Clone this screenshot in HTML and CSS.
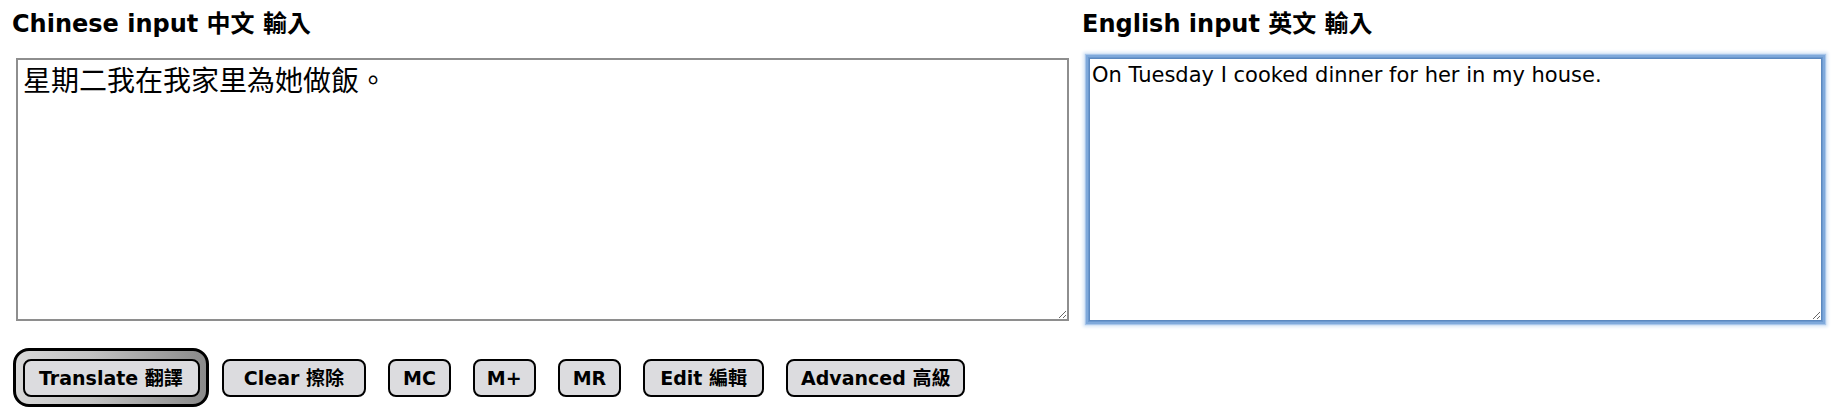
FILE: index.html
```html
<!DOCTYPE html>
<html lang="zh-Hant">
<head>
<meta charset="utf-8">
<title>Chinese English input</title>
<link rel="stylesheet" href="styles.css">
</head>
<body>
<div class="page">
  <div class="inputs">
    <div class="col col-zh">
      <h2 class="label">Chinese input 中文 輸入</h2>
      <textarea class="box box-zh">星期二我在我家里為她做飯。</textarea>
    </div>
    <div class="col col-en">
      <h2 class="label">English input 英文 輸入</h2>
      <textarea class="box box-en focused">On Tuesday I cooked dinner for her in my house.</textarea>
    </div>
  </div>
  <div class="actions">
    <span class="default-ring"><button class="btn btn-default" type="button">Translate 翻譯</button></span>
    <button class="btn btn-clear" type="button">Clear 擦除</button>
    <button class="btn" type="button">MC</button>
    <button class="btn btn-narrow" type="button">M+</button>
    <button class="btn" type="button">MR</button>
    <button class="btn btn-edit" type="button">Edit 編輯</button>
    <button class="btn" type="button">Advanced 高級</button>
  </div>
</div>
</body>
</html>
```

FILE: styles.css
```css
html, body {
  margin: 0;
  padding: 0;
  background: #ffffff;
}

body {
  min-height: 100vh;
}

.page {
  box-sizing: border-box;
  min-height: 420px;
  padding: 10px 0 23px 12px;
  font-family: "DejaVu Sans", "Noto Sans CJK TC", sans-serif;
  color: #000;
}

.inputs {
  display: grid;
  grid-template-columns: 1057px 745px;
  column-gap: 13px;
}

.col {
  display: flex;
  flex-direction: column;
}

.label {
  margin: 0;
  font-size: 24px;
  line-height: 28px;
  font-weight: bold;
  white-space: nowrap;
}

.box {
  display: block;
  box-sizing: border-box;
  margin-top: 20px;
  height: 263px;
  color: #000;
  background: #fff;
  outline: none;
}

.box-zh {
  margin-left: 4px;
  width: 1053px;
  border: 2px solid #8e8e8e;
  padding: 1px 5px;
  font-family: "Noto Sans CJK TC", "DejaVu Sans", sans-serif;
  font-size: 28px;
  line-height: 36px;
}

.box-en {
  margin-left: 7px;
  width: 733px;
  border: 1px solid #5b88bf;
  padding: 4px 2px;
  font-family: "DejaVu Sans", "Noto Sans CJK TC", sans-serif;
  font-size: 21px;
  line-height: 25px;
}

.focused {
  box-shadow: 0 0 0 1px #6a98cf, 0 0 0 3px #7fa9db, 0 0 1px 4px #a8c6ea, 0 0 3px 6px #dbe8f7;
}

.actions {
  display: flex;
  align-items: center;
  gap: 22px;
  margin-top: 38px;
  padding-left: 11px;
}

.default-ring {
  display: flex;
  align-items: center;
  margin: -11px -9px -10px -10px;
  padding: 8px 6px 7px 7px;
  border: 3px solid #000;
  border-radius: 16px;
  background: linear-gradient(to right, #d8d8d8 0%, #c2c2c2 40%, #8a8a8a 100%);
}

.btn {
  box-sizing: border-box;
  height: 38px;
  margin: 0;
  padding: 0 13px;
  border: 2px solid #000;
  border-radius: 8px;
  background: #dcdcdf;
  color: #000;
  font-family: "DejaVu Sans", "Noto Sans CJK TC", sans-serif;
  font-size: 19px;
  font-weight: bold;
  line-height: 34px;
  white-space: nowrap;
  cursor: pointer;
}

.btn-default {
  padding: 0 15px 0 14px;
}

.btn-clear {
  padding: 0 20px;
}

.btn-narrow {
  padding: 0 12px;
}

.btn-edit {
  padding: 0 15px;
}
```
